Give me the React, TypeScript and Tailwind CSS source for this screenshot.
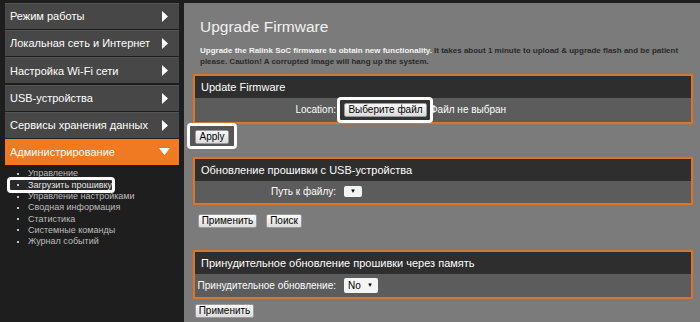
const font = { fontFamily: '"Liberation Sans", Arial, sans-serif' }

const menu = [
  'Режим работы',
  'Локальная сеть и Интернет',
  'Настройка Wi-Fi сети',
  'USB-устройства',
  'Сервисы хранения данных',
]

const subItems = [
  'Управление',
  'Загрузить прошивку',
  'Управление настройками',
  'Сводная информация',
  'Статистика',
  'Системные команды',
  'Журнал событий',
]

function Btn({ children, className = '' }: { children: React.ReactNode; className?: string }) {
  return (
    <button
      className={`relative z-10 h-[14px] px-[2px] whitespace-nowrap text-[10px] leading-none text-black rounded-[2px] border border-[#9a9a9a] bg-gradient-to-b from-[#fbfbfb] to-[#dcdcdc] ${className}`}
    >
      {children}
    </button>
  )
}

function Highlight({ className }: { className: string }) {
  return <div className={`absolute z-0 border-[3px] border-white rounded-[4px] ${className}`} />
}

function Section({ title, children }: { title: string; children: React.ReactNode }) {
  return (
    <div className="border-2 border-[#d8772c] shadow-[0_0_1px_#c06a2a]">
      <div className="h-[22px] bg-[#2e2e2e] flex items-center pl-[6px] text-[11px] text-white">{title}</div>
      {children}
    </div>
  )
}

function Row({ label, children, h }: { label: string; children: React.ReactNode; h: string }) {
  return (
    <div className={`${h} bg-[#5c5c5c] flex items-center`}>
      <div className="w-[141px] shrink-0 text-right text-[10px] text-white whitespace-nowrap">{label}</div>
      <div className="ml-[8px] flex items-center">{children}</div>
    </div>
  )
}

export default function App() {
  return (
    <div className="w-[700px] h-[322px] bg-[#1e1e1e] flex pt-[3px] overflow-hidden" style={font}>
      {/* Sidebar */}
      <div className="w-[184px] shrink-0 pl-[5px] pr-[5px]">
        <div className="flex flex-col gap-[1.2px]">
          {menu.map(m => (
            <div key={m} className="h-[26px] bg-[#474747] border-t border-[#555] flex items-center justify-between pl-[5px] pr-[11px] text-[11px] text-white whitespace-nowrap">
              <span>{m}</span>
              <svg width="6" height="11" viewBox="0 0 6 11"><polygon points="0,0 6,5.5 0,11" fill="#fff" /></svg>
            </div>
          ))}
          <div className="h-[26px] bg-[#f07a22] flex items-center justify-between pl-[5px] pr-[9px] text-[11px] text-white">
            <span>Администрирование</span>
            <svg width="11" height="7" viewBox="0 0 11 7"><polygon points="0,0 11,0 5.5,7" fill="#fff" /></svg>
          </div>
        </div>
        <ul className="pt-[3.4px] text-[9px] leading-[11.3px] text-[#bdbdbd]">
          {subItems.map((s, i) => (
            <li key={s} className="relative flex items-center">
              {i === 1 && <Highlight className="left-[2px] w-[108px] top-[-2.5px] h-[16px] bg-[#2a2a2a] border-2" />}
              <span className="relative z-10 w-[2px] h-[2px] bg-[#c8c8c8] ml-[12px]" />
              <span className={`relative z-10 ml-[9px] ${i === 1 ? 'text-[#e6e6e6]' : ''}`}>{s}</span>
            </li>
          ))}
        </ul>
      </div>

      {/* Main */}
      <div className="flex-1 bg-[#7b7b7b] pl-[9px] pr-[7px]">
        <h1 className="ml-[7px] mt-[14.6px] text-[15.5px] leading-[18px] text-[#f2f2f2]">Upgrade Firmware</h1>
        <p className="ml-[7px] mt-[9.4px] text-[8px] leading-[11px] font-bold text-[#2a2a2a] pr-[6px]">
          <span className="text-[#f4f4f4]">Upgrade the Ralink SoC firmware to obtain new functionality.</span> It takes about 1 minute to upload &amp; upgrade flash and be patient please. Caution! A corrupted image will hang up the system.
        </p>

        <div className="mt-[7px]">
          <Section title="Update Firmware">
            <Row label="Location:" h="h-[24px]">
              <span className="relative flex items-center">
                <Highlight className="left-[-7px] right-[-6px] top-[-6px] bottom-[-6px] bg-[#333]" />
                <Btn className="w-[83px]">Выберите файл</Btn>
              </span>
              <span className="ml-[3px] text-[10px] text-white">Файл не выбран</span>
            </Row>
          </Section>
        </div>

        <div className="mt-[6px] ml-[2px] flex">
          <span className="relative flex">
            <Highlight className="left-[-8px] right-[-8px] top-[-7px] bottom-[-5px] bg-[#555]" />
            <Btn className="w-[34px]">Apply</Btn>
          </span>
        </div>

        <div className="mt-[13px]">
          <Section title="Обновление прошивки с USB-устройства">
            <Row label="Путь к файлу:" h="h-[22px]">
              <span className="w-[18px] h-[11px] bg-[#f4f4f4] rounded-[2px] flex items-center justify-center text-[6px] text-black">▼</span>
            </Row>
          </Section>
        </div>

        <div className="mt-[9px] ml-[5px] flex gap-[9px]">
          <Btn className="w-[59px]">Применить</Btn>
          <Btn className="w-[36px]">Поиск</Btn>
        </div>

        <div className="mt-[22px]">
          <Section title="Принудительное обновление прошивки через память">
            <Row label="Принудительное обновление:" h="h-[23px]">
              <span className="w-[34px] h-[15px] bg-[#f4f4f4] rounded-[2px] flex items-center justify-between pl-[4px] pr-[5px] text-[10px] text-black">
                <span>No</span>
                <span className="text-[6px]">▼</span>
              </span>
            </Row>
          </Section>
        </div>

        <div className="mt-[5px] ml-[2px] flex">
          <Btn className="w-[59px]">Применить</Btn>
        </div>
      </div>
    </div>
  )
}
